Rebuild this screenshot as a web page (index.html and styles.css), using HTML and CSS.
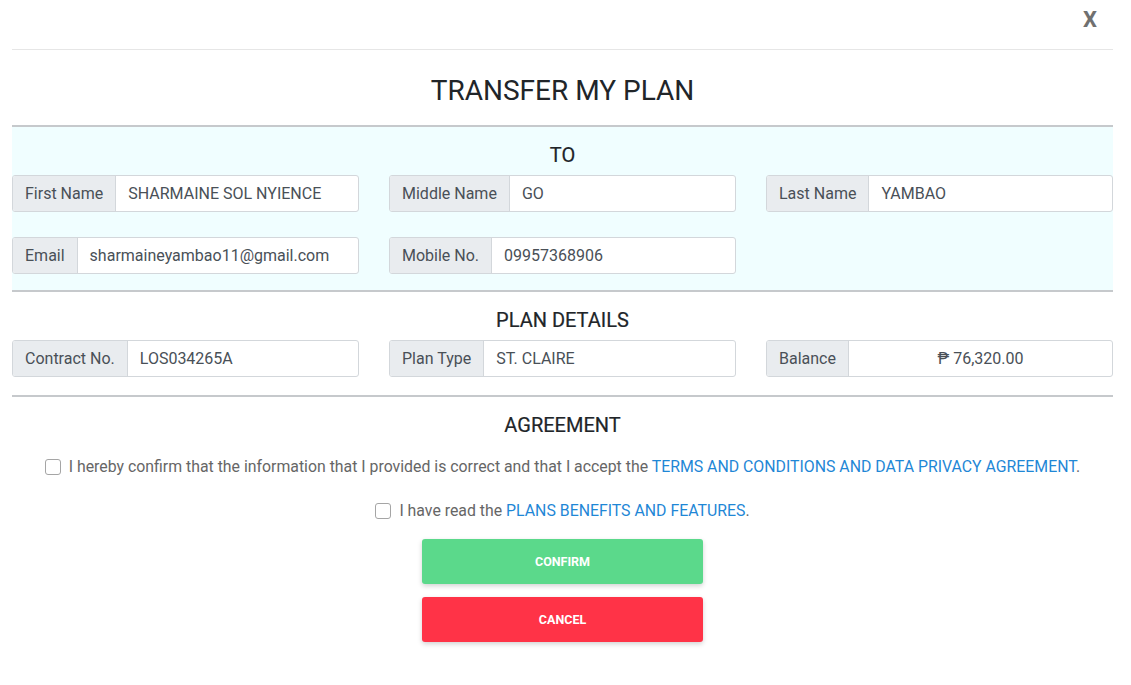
FILE: index.html
```html
<!DOCTYPE html>
<html>
<head>
<meta charset="utf-8">
<link rel="stylesheet" href="styles.css">
</head>
<body>
<div class="modal">
  <div class="modal-header">
    <span class="close">X</span>
  </div>
  <h1 class="title">TRANSFER MY PLAN</h1>

  <section class="section section-to">
    <h2 class="section-title">TO</h2>
    <div class="grid">
      <div class="input-group"><span class="addon">First Name</span><span class="field">SHARMAINE SOL NYIENCE</span></div>
      <div class="input-group"><span class="addon">Middle Name</span><span class="field">GO</span></div>
      <div class="input-group"><span class="addon">Last Name</span><span class="field">YAMBAO</span></div>
      <div class="input-group"><span class="addon">Email</span><span class="field">sharmaineyambao11@gmail.com</span></div>
      <div class="input-group"><span class="addon">Mobile No.</span><span class="field">09957368906</span></div>
    </div>
  </section>

  <section class="section section-plan">
    <h2 class="section-title">PLAN DETAILS</h2>
    <div class="grid">
      <div class="input-group"><span class="addon">Contract No.</span><span class="field">LOS034265A</span></div>
      <div class="input-group"><span class="addon">Plan Type</span><span class="field">ST. CLAIRE</span></div>
      <div class="input-group"><span class="addon">Balance</span><span class="field field-center">₱ 76,320.00</span></div>
    </div>
  </section>

  <section class="section section-agree">
    <h2 class="section-title">AGREEMENT</h2>
    <label class="check-line"><span class="checkbox"></span><span>I hereby confirm that the information that I provided is correct and that I accept the <a class="link">TERMS AND CONDITIONS AND DATA PRIVACY AGREEMENT</a>.</span></label>
    <label class="check-line check-line-2"><span class="checkbox"></span><span>I have read the <a class="link">PLANS BENEFITS AND FEATURES</a>.</span></label>
    <div class="buttons">
      <button class="btn btn-confirm">CONFIRM</button>
      <button class="btn btn-cancel">CANCEL</button>
    </div>
  </section>
</div>
</body>
</html>
```

FILE: styles.css
```css
* { box-sizing: border-box; }
html, body { margin: 0; padding: 0; background: #fff; }
body {
  font-family: Roboto, "Liberation Sans", Arial, sans-serif;
  color: #212529;
}
.modal {
  width: 1131px;
  padding: 0 18px 0 12px;
}
.modal-header {
  height: 50px;
  border-bottom: 1px solid #e6e6e6;
  display: flex;
  justify-content: flex-end;
  align-items: flex-start;
}
.close {
  font-size: 22px;
  font-weight: 700;
  color: #707070;
  margin-top: 8px;
  margin-right: 16px;
  line-height: 24px;
}
.title {
  margin: 0;
  height: 75px;
  padding-top: 5px;
  display: flex;
  align-items: center;
  justify-content: center;
  font-size: 28px;
  font-weight: 400;
  color: #212529;
}
.section {
  border-top: 2px solid #c6c9cc;
  padding: 16px 0 16px;
}
.section-to { background: #f0feff; }
.section-plan { padding-bottom: 18px; }
.section-title {
  margin: 0 0 8px;
  font-size: 20px;
  font-weight: 400;
  line-height: 24px;
  text-align: center;
  color: #212529;
  -webkit-text-stroke: 0.2px #212529;
}
.grid {
  display: grid;
  grid-template-columns: repeat(3, 1fr);
  column-gap: 30px;
  row-gap: 25px;
}
.input-group {
  display: flex;
  height: 37px;
  border: 1px solid #d3d7db;
  border-radius: 3px;
  background: #fff;
  font-size: 16px;
  color: #495057;
  overflow: hidden;
}
.addon {
  display: flex;
  align-items: center;
  padding: 0 12px;
  background: #e9ecef;
  border-right: 1px solid #d3d7db;
  white-space: nowrap;
}
.field {
  display: flex;
  align-items: center;
  padding: 0 12px;
  flex: 1;
  white-space: nowrap;
}
.field-center { justify-content: center; }
.section-agree {
  padding-top: 16px;
  padding-bottom: 40px;
}
.section-agree .section-title { margin-bottom: 18px; }
.check-line {
  display: flex;
  justify-content: center;
  align-items: center;
  gap: 8px;
  font-size: 15.85px;
  color: #666;
  line-height: 24px;
}
.check-line-2 { margin-top: 20px; }
.checkbox {
  width: 16px;
  height: 16px;
  border: 1px solid #a5a5a5;
  border-radius: 3px;
  background: #fff;
  flex: none;
}
.link { color: #1f87d6; text-decoration: none; }
.buttons {
  display: flex;
  flex-direction: column;
  align-items: center;
  gap: 13px;
  margin-top: 16px;
}
.btn {
  width: 281px;
  height: 45px;
  border: none;
  border-radius: 3px;
  color: #fff;
  font-family: Roboto, "Liberation Sans", Arial, sans-serif;
  font-size: 12.5px;
  font-weight: 700;
  box-shadow: 0 2px 5px rgba(0,0,0,0.18);
}
.btn-confirm { background: #5bd98b; }
.btn-cancel { background: #ff3347; }
```
